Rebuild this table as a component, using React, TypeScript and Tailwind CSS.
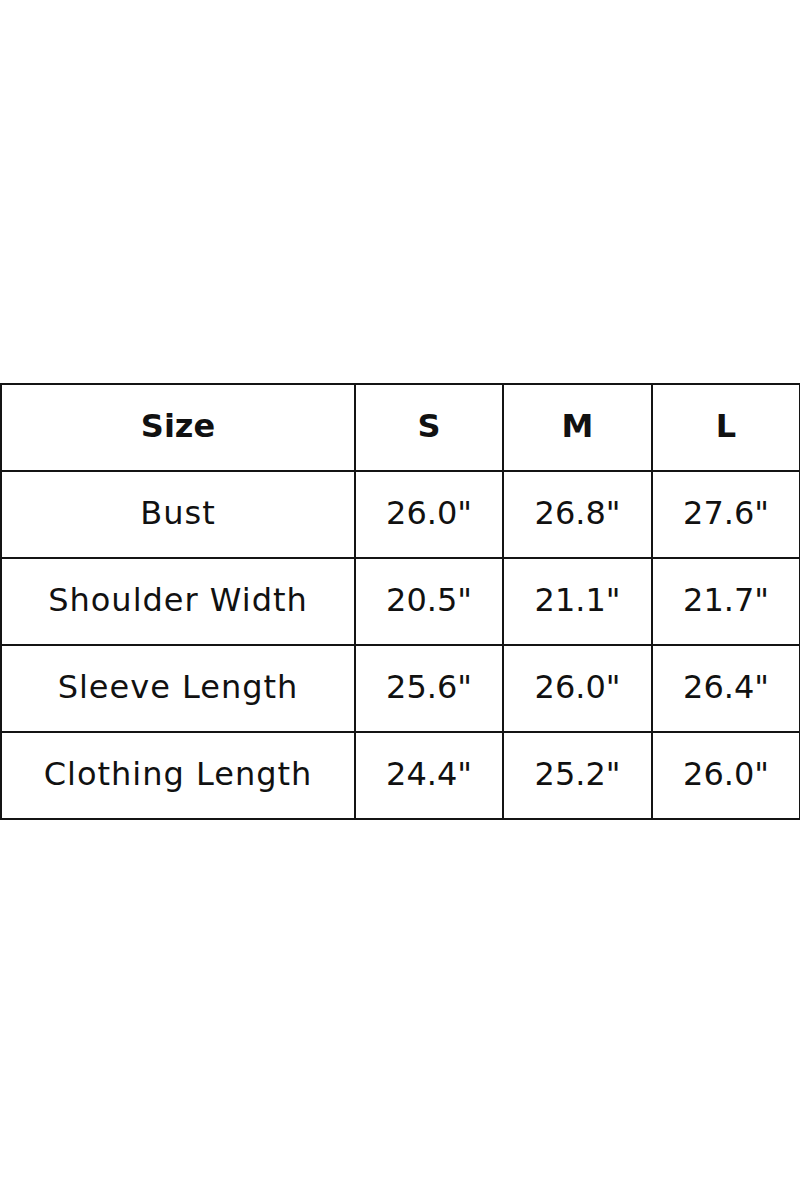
const rows = [
  ['Bust', '26.0"', '26.8"', '27.6"'],
  ['Shoulder Width', '20.5"', '21.1"', '21.7"'],
  ['Sleeve Length', '25.6"', '26.0"', '26.4"'],
  ['Clothing Length', '24.4"', '25.2"', '26.0"'],
]

const cell = 'border-2 border-[#141414] text-center align-middle p-0 pb-[4px]'

const App = () => {
  return (
    <div
      className="w-[800px] h-[1200px] bg-white pt-[383px]"
      style={{ fontFamily: '"DejaVu Sans", "Noto Sans", sans-serif' }}
    >
      <table className="w-[799px] border-collapse table-fixed text-[#111] text-[32px]">
        <colgroup>
          <col className="w-[354px]" />
          <col className="w-[148px]" />
          <col className="w-[149px]" />
          <col className="w-[148px]" />
        </colgroup>
        <thead>
          <tr className="h-[87px]">
            {['Size', 'S', 'M', 'L'].map((h) => (
              <th key={h} className={`${cell} font-bold`}>
                {h}
              </th>
            ))}
          </tr>
        </thead>
        <tbody>
          {rows.map((r) => (
            <tr key={r[0]} className="h-[87px]">
              {r.map((v, i) => (
                <td
                  key={`${r[0]}-${i}`}
                  className={`${cell} ${i === 0 ? 'tracking-[1px]' : ''}`}
                >
                  {v}
                </td>
              ))}
            </tr>
          ))}
        </tbody>
      </table>
    </div>
  )
}

export default App
